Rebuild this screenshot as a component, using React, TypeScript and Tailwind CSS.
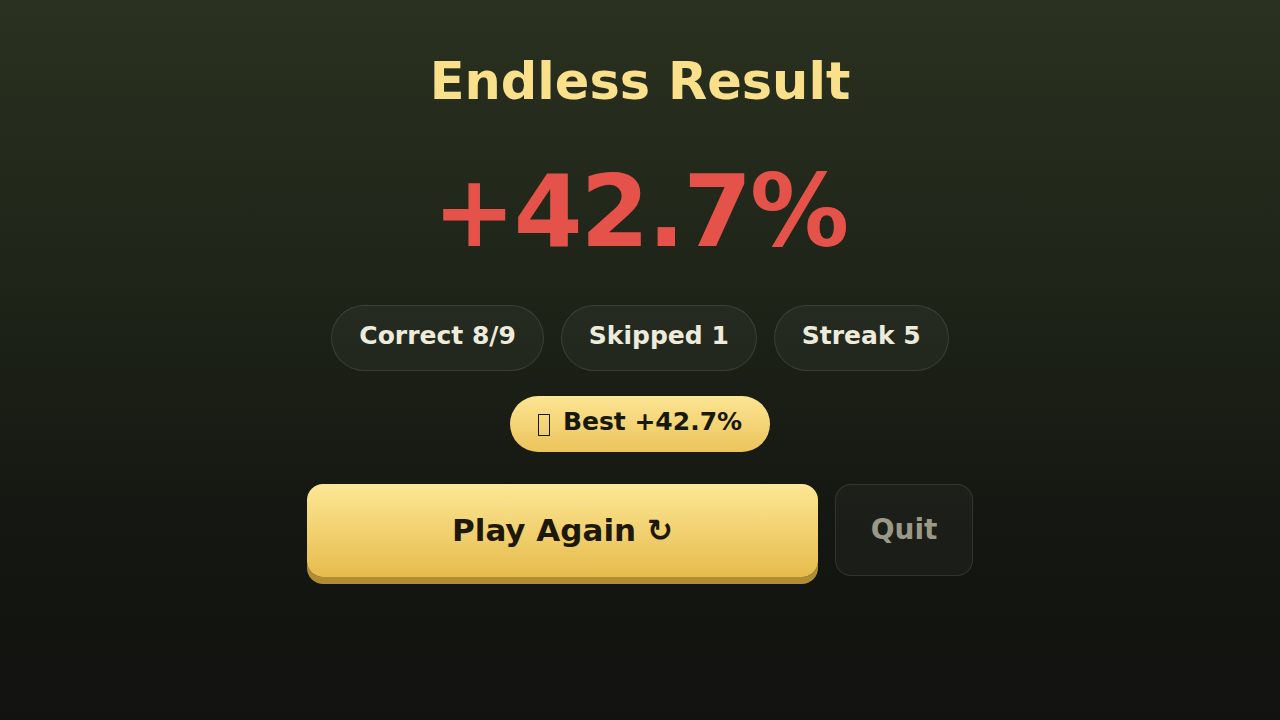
import React from "react";

const FONT = { fontFamily: '"DejaVu Sans", "Noto Sans", sans-serif' };

/** Small rounded stat chip shown under the score */
function StatPill({ label }: { label: string }) {
  return (
    <div className="flex h-[66px] items-center rounded-full border border-white/10 bg-white/[0.04] px-[27px] pb-[4px] text-[25px] font-bold text-[#ecebdc]">
      {label}
    </div>
  );
}

export default function App() {
  return (
    <div
      style={FONT}
      className="flex h-[720px] w-[1280px] flex-col items-center bg-[linear-gradient(180deg,#2a3120_0%,#1e2418_40%,#141611_75%,#121310_100%)]"
    >
      {/* Title */}
      <h1 className="mt-[52px] text-[51px] leading-[60px] font-bold text-[#fbe08c]">
        Endless Result
      </h1>

      {/* Score */}
      <div className="mt-[46px] text-[99px] leading-[108px] font-bold tracking-[-0.02em] text-[#e5524a]">
        +42.7%
      </div>

      {/* Stats */}
      <div className="mt-[39px] flex gap-[17px]">
        <StatPill label="Correct 8/9" />
        <StatPill label="Skipped 1" />
        <StatPill label="Streak 5" />
      </div>

      <div className="mt-[25px] flex h-[56px] items-center gap-[13px] rounded-full bg-[linear-gradient(180deg,#fde594_0%,#ebc35a_100%)] px-[28px] text-[25px] font-bold text-[#17190c]">
        <span className="mt-[2px] inline-block h-[22px] w-[12px] border-[1.5px] border-[#17190c]" aria-hidden="true" />
        <span className="pb-[4px]">Best +42.7%</span>
      </div>

      {/* Actions */}
      <div className="mt-[32px] flex items-start gap-[17px]">
        <button className="flex h-[93px] w-[511px] items-center justify-center rounded-[16px] bg-[linear-gradient(180deg,#fde796_0%,#e6bb4c_100%)] text-[31px] font-bold text-[#1d1809] shadow-[0_7px_0_#b18c32]">
          Play Again ↻
        </button>
        <button className="flex h-[92px] w-[138px] items-center justify-center rounded-[16px] border border-white/10 bg-white/[0.03] text-[28px] font-bold text-[#9a9986]">
          Quit
        </button>
      </div>
    </div>
  );
}
